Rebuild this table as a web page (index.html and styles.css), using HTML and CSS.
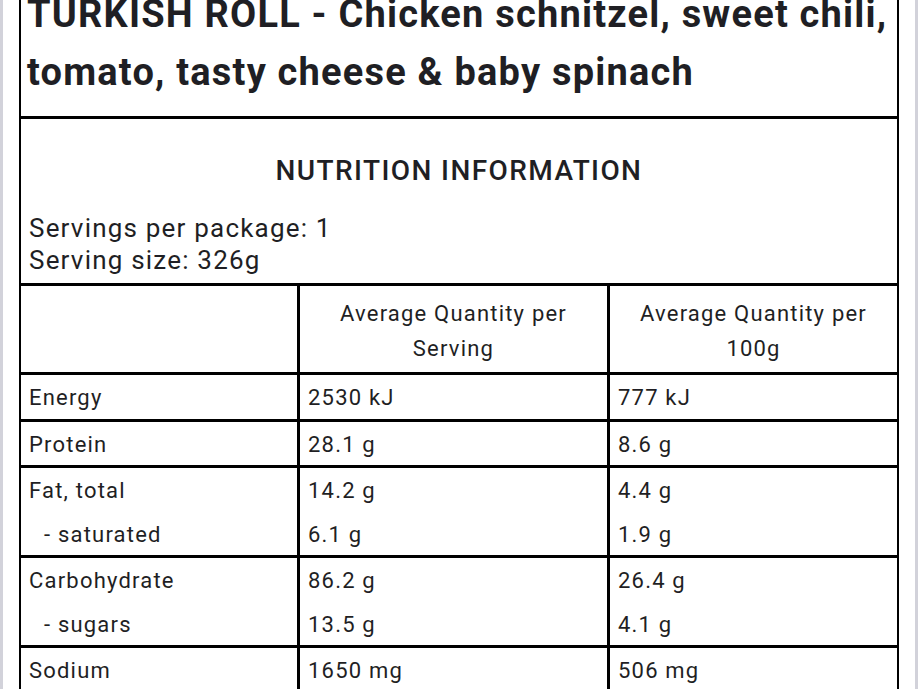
FILE: index.html
```html
<!DOCTYPE html>
<html lang="en">
<head>
<meta charset="utf-8">
<title>Nutrition Information</title>
<link rel="stylesheet" href="styles.css">
</head>
<body>
<div class="page">
  <div class="label">
    <h1 class="title">TURKISH ROLL - Chicken schnitzel, sweet chili,<br>tomato, tasty cheese &amp; baby spinach</h1>
    <div class="info">
      <h2 class="info-heading">NUTRITION INFORMATION</h2>
      <p class="servings">Servings per package: 1<br>Serving size: 326g</p>
    </div>
    <table class="facts">
      <colgroup>
        <col class="c1"><col class="c2"><col class="c3">
      </colgroup>
      <thead>
        <tr>
          <th></th>
          <th>Average Quantity per<br>Serving</th>
          <th>Average Quantity per<br>100g</th>
        </tr>
      </thead>
      <tbody>
        <tr><td><div>Energy</div></td><td><div>2530 kJ</div></td><td><div>777 kJ</div></td></tr>
        <tr><td><div>Protein</div></td><td><div>28.1 g</div></td><td><div>8.6 g</div></td></tr>
        <tr><td><div>Fat, total</div><div class="sub">- saturated</div></td><td><div>14.2 g</div><div>6.1 g</div></td><td><div>4.4 g</div><div>1.9 g</div></td></tr>
        <tr><td><div>Carbohydrate</div><div class="sub">- sugars</div></td><td><div>86.2 g</div><div>13.5 g</div></td><td><div>26.4 g</div><div>4.1 g</div></td></tr>
        <tr><td><div>Sodium</div></td><td><div>1650 mg</div></td><td><div>506 mg</div></td></tr>
      </tbody>
    </table>
  </div>
</div>
</body>
</html>
```

FILE: styles.css
```css
html, body {
  margin: 0;
  padding: 0;
  background: #ffffff;
  overflow: hidden;
}

body {
  font-family: Roboto, "Liberation Sans", sans-serif;
  color: #1f1f24;
}

.page {
  border-left: 3px solid #d2d2da;
  border-right: 3px solid #d2d2da;
  padding: 0 16px;
  min-height: 100vh;
  box-sizing: border-box;
  width: 918px;
}

.label {
  margin-top: -31px;
  border: 2px solid #000;
  border-top-width: 3px;
}

.title {
  margin: 0;
  padding: 13px 0 15px 6px;
  font-size: 38px;
  font-weight: 700;
  line-height: 58px;
  letter-spacing: 1.2px;
  white-space: nowrap;
}

.info {
  border-top: 3px solid #000;
  padding: 32px 8px 7px;
}

.info-heading {
  margin: 0 0 21px;
  text-align: center;
  font-size: 28px;
  font-weight: 500;
  line-height: 40px;
  letter-spacing: 1.4px;
}

.servings {
  margin: 0;
  font-size: 26px;
  line-height: 32px;
  letter-spacing: 1.2px;
}

.facts {
  width: 100%;
  table-layout: fixed;
  border-collapse: separate;
  border-spacing: 0;
  font-size: 22px;
  letter-spacing: 1.2px;
}

.c1 { width: 276px; }
.c2 { width: 310px; }
.c3 { width: 290px; }

.facts th,
.facts td {
  border-top: 3px solid #000;
  border-left: 3px solid #000;
  vertical-align: top;
  text-align: left;
}

.facts th:first-child,
.facts td:first-child {
  border-left: none;
}

.facts th {
  font-weight: 400;
  text-align: center;
  line-height: 35px;
  padding: 10px 8px 6px;
}

.facts td {
  padding: 1px 8px 0;
}

.facts td div {
  line-height: 43.5px;
}

.facts td div:last-child {
  margin-bottom: -1px;
}

.facts td .sub {
  padding-left: 15px;
}
```
